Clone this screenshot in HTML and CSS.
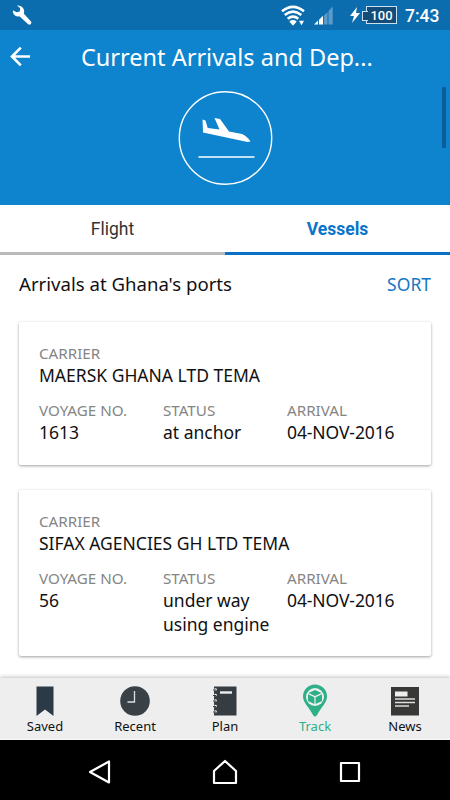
FILE: index.html
```html
<!DOCTYPE html>
<html lang="en">
<head>
<meta charset="utf-8">
<meta name="viewport" content="width=device-width, initial-scale=1">
<title>Current Arrivals and Departures</title>
<link rel="stylesheet" href="styles.css">
</head>
<body>
<div class="screen">
  <div class="status-bar">
    <svg class="wrench" viewBox="0 0 20 20" width="20" height="20"><path d="M1 5.200C.2 8.800 3.400 12.200 7.400 11.200L16.200 19.300Q17.600 20.200 18.800 19Q20 17.700 19 16.500L11.900 8.800C13.300 4.300 10 0 5 .500L8.200 3.300L7.800 6.400L4.500 7.200Z"/></svg>
    <div class="indicators">
      <svg width="24" height="21" viewBox="0 0 24 21"><g fill="none" stroke="#fff" stroke-width="2.600"><path d="M1 6.200Q12-2.600 23 6.200M3.700 10Q12 3.300 20.300 10M6.700 13.700Q12 9.700 17.300 13.700"/></g><path fill="#fff" d="M8.300 16.500Q12 13.700 15.700 16.500L12 20.800ZM18 15.800h5l-2.500 4.500z"/></svg>
      <svg class="signal" width="19" height="19" viewBox="0 0 19 19"><path fill="#5a9bc9" d="M10 9.500L13.500 6V18.500H10ZM14.500 5L18.700.500V18.500H14.500Z"/><path fill="#fff" d="M0 18.500L4 14.600V18.500ZM5 13.800L9 9.800V18.500H5Z"/></svg>
      <svg class="bolt" width="10" height="16" viewBox="0 0 10 16"><path fill="#fff" d="M7 0L0 9H4L2 16L10 6H6Z"/></svg>
      <div class="battery"><span>100</span></div>
      <span class="clock">7:43</span>
    </div>
  </div>
  <header class="hero">
    <div class="title-row">
      <svg class="back" width="20" height="20" viewBox="0 0 20 20"><path fill="none" stroke="#fff" stroke-width="2.600" d="M10.800.700L2 9.500L10.800 18.300M2 9.500H20"/></svg>
      <h1>Current Arrivals and Dep...</h1>
    </div>
    <svg class="plane" width="94" height="94" viewBox="0 0 94 94"><circle cx="47" cy="47" r="46.200" fill="none" stroke="#fff" stroke-width="1.400"/><path fill="#fff" d="M24 28.500L27 29.500L29.200 37L41 38.500L36 27L41.500 28L50.500 40.500L63.500 43Q68.500 45 72 50.500L69 51L24.500 41.500Z"/><path stroke="#fff" stroke-width="1.300" d="M20 66H76"/></svg>
    <div class="scroll-thumb"></div>
  </header>
  <nav class="tabs"><div class="tab">Flight</div><div class="tab active">Vessels</div></nav>
  <main>
    <div class="list-head"><h2>Arrivals at Ghana's ports</h2><span class="sort">SORT</span></div>
    <article class="card">
      <div class="label">CARRIER</div><div class="value">MAERSK GHANA LTD TEMA</div>
      <div class="details">
        <div><div class="label">VOYAGE NO.</div><div class="value">1613</div></div>
        <div><div class="label">STATUS</div><div class="value">at anchor</div></div>
        <div><div class="label">ARRIVAL</div><div class="value date">04-NOV-2016</div></div>
      </div>
    </article>
    <article class="card tall">
      <div class="label">CARRIER</div><div class="value">SIFAX AGENCIES GH LTD TEMA</div>
      <div class="details">
        <div><div class="label">VOYAGE NO.</div><div class="value">56</div></div>
        <div><div class="label">STATUS</div><div class="value">under way<br>using engine</div></div>
        <div><div class="label">ARRIVAL</div><div class="value date">04-NOV-2016</div></div>
      </div>
    </article>
  </main>
  <nav class="bottom-nav">
    <div class="item"><svg width="32" height="32" viewBox="0 0 32 32"><path fill="#2c3a47" d="M7.500 1.500H24.500V31L16 24.500L7.500 31Z"/></svg><span>Saved</span></div>
    <div class="item"><svg width="32" height="32" viewBox="0 0 32 32"><circle cx="16" cy="16" r="14.800" fill="#394146"/><path fill="none" stroke="#dce0e2" stroke-width="1.300" d="M15.500 6V17H8.500"/></svg><span>Recent</span></div>
    <div class="item"><svg width="32" height="32" viewBox="0 0 32 32"><path fill="#353d42" d="M5 1.500H27.500V30.500H5Z"/><path stroke="#eee" stroke-width="2.400" d="M11 7.500H23"/><g fill="#eee"><circle cx="6.500" cy="4.500" r="1.300"/><circle cx="6.500" cy="10" r="1.300"/><circle cx="6.500" cy="15.500" r="1.300"/><circle cx="6.500" cy="21" r="1.300"/><circle cx="6.500" cy="26.500" r="1.300"/></g><path stroke="#353d42" d="M4 5H7M4 10.500H7M4 16H7M4 21.500H7M4 27H7"/></svg><span>Plan</span></div>
    <div class="item current"><svg width="32" height="32" viewBox="0 0 32 32"><path fill="#2eaf87" d="M16-.5A12 12 0 0 0 4 11.500C4 18 10 22 14 30Q16 33 18 30C22 22 28 18 28 11.500A12 12 0 0 0 16-.5Z"/><circle cx="16" cy="12" r="9" fill="#eee"/><path fill="#2eaf87" d="M16 5L22.500 8L16 11L9.500 8ZM9 9.300L15.400 12.200V19L9 16ZM23 9.300L16.600 12.200V19L23 16Z"/></svg><span>Track</span></div>
    <div class="item"><svg width="32" height="32" viewBox="0 0 32 32"><path fill="#383836" d="M2 2H30V30.500H2Z"/><path fill="#eee" d="M6 6.500H18.500V11.500H6Z"/><path stroke="#ddd" stroke-width="1.400" d="M6 14H26M6 17.500H26M6 21H20"/></svg><span>News</span></div>
  </nav>
  <div class="system-nav">
    <svg width="24" height="26" viewBox="0 0 24 26"><path d="M3 13L22 2.500V23.500Z"/></svg>
    <svg width="26" height="26" viewBox="0 0 26 26"><path d="M2 12L13 2L24 12V24H2Z"/></svg>
    <svg width="22" height="22" viewBox="0 0 22 22"><path d="M2 2H20V20H2Z"/></svg>
  </div>
</div>
</body>
</html>
```
FILE: styles.css
```css
* { box-sizing: border-box; }
body { margin: 0; font-family: "Noto Sans", sans-serif; color: #111; background: #fff; }
h1, h2 { margin: 0; font-weight: 400; }
svg { display: block; flex: none; overflow: visible; }
.screen { width: 450px; height: 800px; display: flex; flex-direction: column; overflow: hidden; }
.status-bar { flex: none; height: 30px; background: #0b6dae; display: flex; justify-content: space-between; padding: 5px 10px 0 12px; }
.wrench { fill: #fff; }
.indicators { display: flex; align-items: flex-start; font-family: Roboto, sans-serif; color: #fff; }
.signal { margin: 1px 0 0 9px; }
.bolt { margin: 2px 0 0 17px; }
.battery { width: 31px; height: 18px; margin: 1px 0 0 6px; border: 1.500px solid #cbe0f0; background: #124c78; font-size: 13px; line-height: 17px; font-weight: 500; text-align: center; position: relative; }
.battery::before { content: ""; position: absolute; left: -5px; top: 4px; width: 5px; height: 8px; border: 1px solid #cbe0f0; border-right: 0; background: #124c78; }
.clock { width: 35px; margin-left: 8px; font-size: 17.500px; line-height: 22px; font-weight: 500; white-space: nowrap; }
.hero { flex: none; height: 175px; background: #0e83ce; position: relative; }
.title-row { display: flex; align-items: center; height: 54px; padding-left: 10px; }
.title-row h1 { margin-left: 51px; font-size: 23.500px; line-height: 32px; color: #fff; white-space: nowrap; }
.plane { margin: 7px auto 0; transform: translateX(.5px); }
.scroll-thumb { position: absolute; right: 4px; top: 57px; width: 4px; height: 61px; background: #0b5d98; border-radius: 1px; }
.tabs { flex: none; display: flex; height: 50px; font-family: Roboto, sans-serif; font-size: 17.500px; line-height: 49px; text-align: center; }
.tab { flex: 1; border-bottom: 3px solid #b9b9b9; color: #333; }
.tab.active { border-color: #0871c5; color: #0875ca; font-weight: 700; }
main { flex: 1; min-height: 0; padding: 0 19px; overflow: hidden; }
.list-head { display: flex; justify-content: space-between; align-items: center; height: 58px; margin-bottom: 9px; }
h2 { font-size: 18.600px; line-height: 24px; }
.sort { font-size: 17.500px; color: #1476c6; }
.card { height: 143px; margin-bottom: 25px; padding: 20px 20px; border-radius: 2px; box-shadow: 0 1px 3px rgba(0,0,0,.38); }
.card.tall { height: 166px; }
.label { font-size: 15.200px; line-height: 22px; color: #858585; }
.value { font-size: 17.500px; line-height: 22px; white-space: nowrap; }
.date { letter-spacing: -.1px; }
.details { display: grid; grid-template-columns: 124px 124px 1fr; margin-top: 13px; }
.details .label { height: 21px; }
.details .value { line-height: 24px; }
.bottom-nav { flex: none; height: 62px; display: flex; background: #eee; box-shadow: 0 -1px 4px rgba(0,0,0,.25); padding-top: 7px; position: relative; border-bottom: 1px solid #fafafa; }
.item { flex: 1; display: flex; flex-direction: column; align-items: center; font-size: 13px; line-height: 18px; }
.item.current { color: #2eaf87; }
.system-nav { flex: none; height: 60px; background: #000; display: flex; justify-content: space-between; align-items: center; padding: 4px 89px 0 87px; }
.system-nav svg { fill: none; stroke: #fff; stroke-width: 2.200; stroke-linejoin: round; }
```
